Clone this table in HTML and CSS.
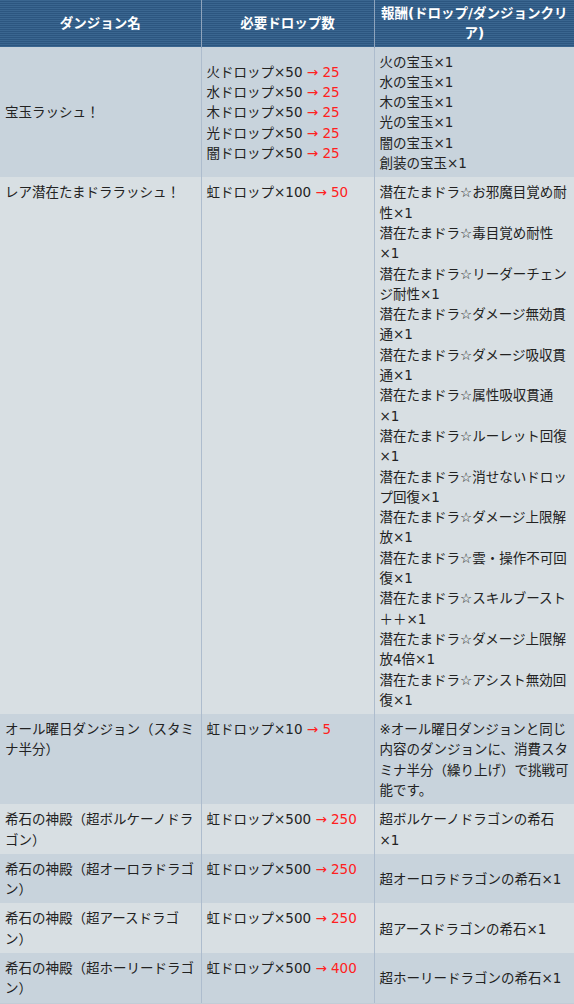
FILE: index.html
```html
<!DOCTYPE html>
<html lang="ja">
<head>
    <meta charset="UTF-8">
    <meta name="viewport" content="width=device-width, initial-scale=1.0">
    <title>ドロップ交換イベント</title>
    <link rel="stylesheet" href="styles.css">
</head>
<body>

<table class="drop-table">
    <colgroup>
        <col class="col-name">
        <col class="col-drop">
        <col class="col-reward">
    </colgroup>
    <thead>
        <tr>
            <th>ダンジョン名</th>
            <th>必要ドロップ数</th>
            <th>報酬(ドロップ/ダンジョンクリア)</th>
        </tr>
    </thead>
    <tbody>
        <tr class="dark">
            <td>宝玉ラッシュ！</td>
            <td>
                火ドロップ×50 <span class="red">→ 25</span><br>
                水ドロップ×50 <span class="red">→ 25</span><br>
                木ドロップ×50 <span class="red">→ 25</span><br>
                光ドロップ×50 <span class="red">→ 25</span><br>
                闇ドロップ×50 <span class="red">→ 25</span>
            </td>
            <td>
                火の宝玉×1<br>
                水の宝玉×1<br>
                木の宝玉×1<br>
                光の宝玉×1<br>
                闇の宝玉×1<br>
                創装の宝玉×1
            </td>
        </tr>
        <tr class="light">
            <td class="top">レア潜在たまドララッシュ！</td>
            <td class="top">虹ドロップ×100 <span class="red">→ 50</span></td>
            <td>
                潜在たまドラ☆お邪魔目覚め耐性×1<br>
                潜在たまドラ☆毒目覚め耐性×1<br>
                潜在たまドラ☆リーダーチェンジ耐性×1<br>
                潜在たまドラ☆ダメージ無効貫通×1<br>
                潜在たまドラ☆ダメージ吸収貫通×1<br>
                潜在たまドラ☆属性吸収貫通×1<br>
                潜在たまドラ☆ルーレット回復×1<br>
                潜在たまドラ☆消せないドロップ回復×1<br>
                潜在たまドラ☆ダメージ上限解放×1<br>
                潜在たまドラ☆雲・操作不可回復×1<br>
                潜在たまドラ☆スキルブースト＋＋×1<br>
                潜在たまドラ☆ダメージ上限解放4倍×1<br>
                潜在たまドラ☆アシスト無効回復×1
            </td>
        </tr>
        <tr class="dark">
            <td class="top">オール曜日ダンジョン（スタミナ半分）</td>
            <td class="top">虹ドロップ×10 <span class="red">→ 5</span></td>
            <td>※オール曜日ダンジョンと同じ内容のダンジョンに、消費スタミナ半分（繰り上げ）で挑戦可能です。</td>
        </tr>
        <tr class="light">
            <td>希石の神殿（超ボルケーノドラゴン）</td>
            <td class="top">虹ドロップ×500 <span class="red">→ 250</span></td>
            <td>超ボルケーノドラゴンの希石×1</td>
        </tr>
        <tr class="dark">
            <td>希石の神殿（超オーロラドラゴン）</td>
            <td class="top">虹ドロップ×500 <span class="red">→ 250</span></td>
            <td>超オーロラドラゴンの希石×1</td>
        </tr>
        <tr class="light">
            <td>希石の神殿（超アースドラゴン）</td>
            <td class="top">虹ドロップ×500 <span class="red">→ 250</span></td>
            <td>超アースドラゴンの希石×1</td>
        </tr>
        <tr class="dark">
            <td>希石の神殿（超ホーリードラゴン）</td>
            <td class="top">虹ドロップ×500 <span class="red">→ 400</span></td>
            <td>超ホーリードラゴンの希石×1</td>
        </tr>
    </tbody>
</table>

</body>
</html>
```

FILE: styles.css
```css
body {
    margin: 0;
    background-color: #fff;
    font-family: "DejaVu Sans", "Noto Sans CJK JP", sans-serif;
    font-size: 13.5px;
    line-height: 20.3px;
    color: #222;
}
.drop-table {
    width: 574px;
    border-collapse: collapse;
    table-layout: fixed;
}
.col-name {
    width: 201px;
}
.col-drop {
    width: 173px;
}
.col-reward {
    width: 200px;
}
.drop-table th {
    padding: 3px 5px;
    color: #fff;
    font-weight: bold;
    text-align: center;
    background: repeating-linear-gradient(to bottom, #3a6690 0, #3a6690 1px, #2c5680 1px, #2c5680 2px);
    border-left: 1px solid #8ea4bc;
}
.drop-table td {
    padding: 4px 5px;
    vertical-align: middle;
    border-left: 1px solid #adbccd;
}
.drop-table th:first-child, .drop-table td:first-child {
    border-left: none;
}
.drop-table tbody tr:last-child td {
    border-bottom: 1px solid #c2ccd6;
}
.drop-table td.top {
    vertical-align: top;
}
.dark td {
    background-color: #c8d3dc;
    border-top: 1px solid #c8d3dc;
}
.light td {
    background-color: #d8dfe3;
    border-top: 1px solid #d8dfe3;
}
.red {
    color: #ff2020;
}
```
